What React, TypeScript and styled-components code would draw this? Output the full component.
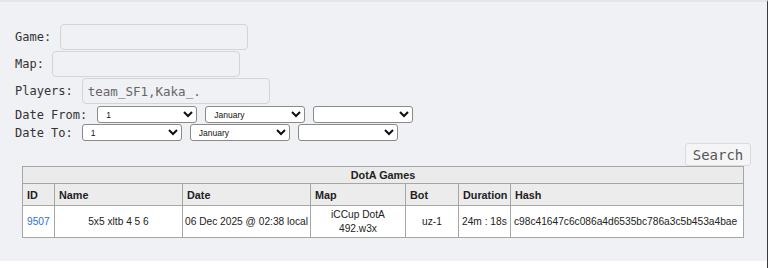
import React from 'react';
import styled, { createGlobalStyle } from 'styled-components';

const GlobalStyle = createGlobalStyle`
  html, body {
    margin: 0;
    padding: 0;
    background: #ffffff;
  }
`;

const Page = styled.div`
  width: 768px;
  height: 268px;
  border-right: 1px solid #3a3a3a;
  border-top: 2px solid #e3e5ea;
  box-sizing: border-box;
  background: #ffffff;
`;

const Panel = styled.form`
  background: #f0f1f5;
  padding: 22px 16px 23px 15px;
  display: flex;
  flex-direction: column;
`;

const FieldRow = styled.div<{ $gap?: number; $mb?: number }>`
  display: flex;
  align-items: center;
  gap: ${(p) => p.$gap ?? 9}px;
  margin-bottom: ${(p) => p.$mb ?? 1}px;
`;

const Label = styled.label`
  font-family: 'DejaVu Sans Mono', 'Liberation Mono', monospace;
  font-size: 12px;
  color: #333;
  white-space: nowrap;
`;

const TextInput = styled.input`
  width: 188px;
  height: 26px;
  box-sizing: border-box;
  border: 1px solid #d3d4d8;
  border-radius: 4px;
  background: #f0f1f5;
  padding: 0 5px;
  font-family: 'DejaVu Sans Mono', 'Liberation Mono', monospace;
  font-size: 12.5px;
  color: #666;
  outline: none;
`;

const Selects = styled.div`
  display: flex;
  gap: 8px;
`;

const Select = styled.select`
  width: 100px;
  height: 17px;
  box-sizing: border-box;
  font-family: 'Liberation Sans', Arial, sans-serif;
  font-size: 8.5px;
  padding: 0 0 0 4px;
  border: 1px solid #8a8a8a;
  border-radius: 3px;
  background: #ffffff;
  color: #111;
`;

const ButtonRow = styled.div`
  display: flex;
  justify-content: flex-end;
  margin-top: 1px;
`;

const SearchButton = styled.button`
  width: 66px;
  height: 23px;
  box-sizing: border-box;
  border: 1px solid #dadbdf;
  border-radius: 3px;
  background: #f5f5f7;
  font-family: 'DejaVu Sans Mono', 'Liberation Mono', monospace;
  font-size: 14px;
  color: #555;
  padding: 0;
`;

const Games = styled.table`
  margin-left: 7px;
  width: 721px;
  border-collapse: collapse;
  table-layout: fixed;
  font-family: 'Liberation Sans', Arial, sans-serif;
  font-size: 10.2px;
  color: #222;
  border: 1px solid #8c8c8c;
`;

const Title = styled.th`
  height: 16px;
  padding: 0;
  background: #ebebeb;
  border: 1px solid #a6a6a6;
  font-size: 10.8px;
  font-weight: bold;
  text-align: center;
`;

const Head = styled.th`
  height: 21px;
  padding: 0 4px;
  background: #ececec;
  border: 1px solid #a6a6a6;
  font-size: 10.8px;
  font-weight: bold;
  text-align: left;
`;

const Cell = styled.td<{ $align?: string; $pad?: number; $wrap?: boolean }>`
  height: 31px;
  padding: 0 ${(p) => p.$pad ?? 4}px;
  background: #ffffff;
  border: 1px solid #a6a6a6;
  text-align: ${(p) => p.$align ?? 'left'};
  line-height: 14px;
  white-space: ${(p) => (p.$wrap ? 'normal' : 'nowrap')};
`;

const GameLink = styled.a`
  color: #1f6fd6;
  text-decoration: none;
`;

const days = Array.from({ length: 31 }, (_, i) => String(i + 1));
const months = ['January', 'February', 'March', 'April', 'May', 'June', 'July', 'August', 'September', 'October', 'November', 'December'];

const DatePick = () => (
  <Selects>
    <Select defaultValue="1">
      {days.map((d) => (
        <option key={d}>{d}</option>
      ))}
    </Select>
    <Select defaultValue="January">
      {months.map((m) => (
        <option key={m}>{m}</option>
      ))}
    </Select>
    <Select defaultValue="">
      <option value=""></option>
      <option>2025</option>
    </Select>
  </Selects>
);

const columns = [
  { name: 'ID', width: 32 },
  { name: 'Name', width: 128 },
  { name: 'Date', width: 128 },
  { name: 'Map', width: 95 },
  { name: 'Bot', width: 53 },
  { name: 'Duration', width: 52 },
  { name: 'Hash', width: 233 },
];

export default function App() {
  return (
    <Page>
      <GlobalStyle />
      <Panel onSubmit={(e) => e.preventDefault()}>
        <FieldRow>
          <Label>Game:</Label>
          <TextInput />
        </FieldRow>
        <FieldRow $gap={8}>
          <Label>Map:</Label>
          <TextInput />
        </FieldRow>
        <FieldRow $mb={2}>
          <Label>Players:</Label>
          <TextInput defaultValue="team_SF1,Kaka_." />
        </FieldRow>
        <FieldRow $gap={10}>
          <Label>Date From:</Label>
          <DatePick />
        </FieldRow>
        <FieldRow>
          <Label>Date To:</Label>
          <DatePick />
        </FieldRow>
        <ButtonRow>
          <SearchButton type="submit">Search</SearchButton>
        </ButtonRow>
        <Games>
          <colgroup>
            {columns.map((c) => (
              <col key={c.name} style={{ width: c.width }} />
            ))}
          </colgroup>
          <thead>
            <tr>
              <Title colSpan={7}>DotA Games</Title>
            </tr>
            <tr>
              {columns.map((c) => (
                <Head key={c.name}>{c.name}</Head>
              ))}
            </tr>
          </thead>
          <tbody>
            <tr>
              <Cell>
                <GameLink href="#">9507</GameLink>
              </Cell>
              <Cell $align="center">5x5 xltb 4 5 6</Cell>
              <Cell $pad={2}>06 Dec 2025 @ 02:38 local</Cell>
              <Cell $align="center" $wrap>
                iCCup DotA 492.w3x
              </Cell>
              <Cell $align="center">uz-1</Cell>
              <Cell $pad={3}>24m : 18s</Cell>
              <Cell $pad={3}>c98c41647c6c086a4d6535bc786a3c5b453a4bae</Cell>
            </tr>
          </tbody>
        </Games>
      </Panel>
    </Page>
  );
}
